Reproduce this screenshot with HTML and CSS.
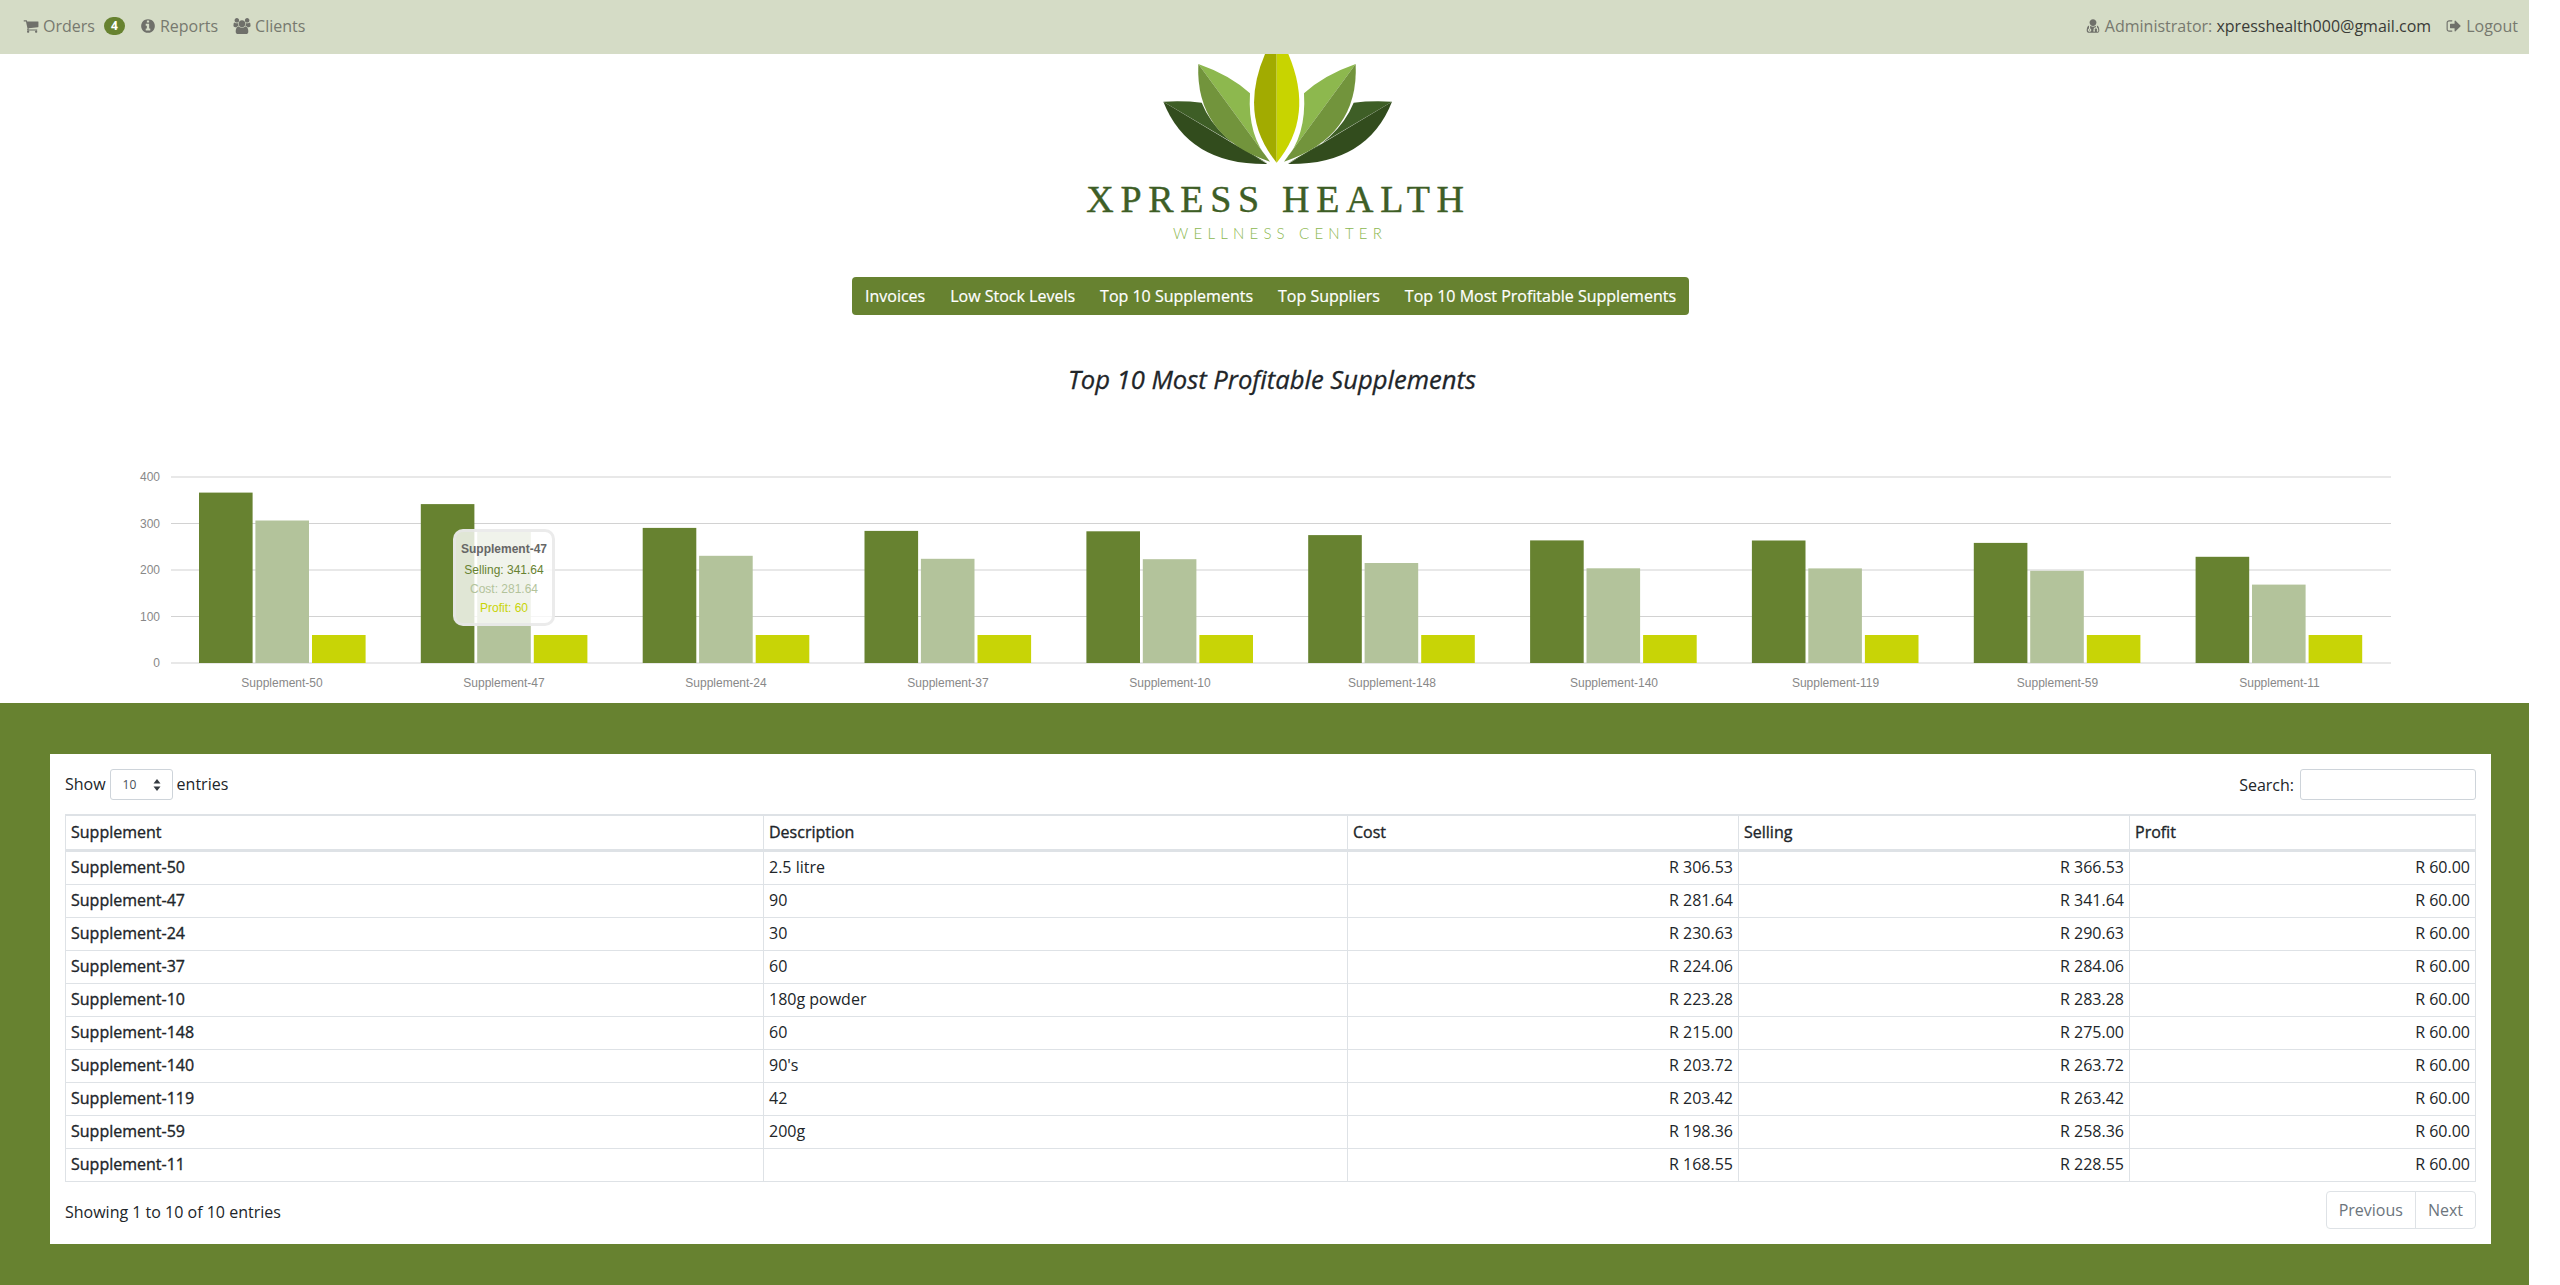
FILE: index.html
```html
<!DOCTYPE html>
<html lang="en">
<head>
  <meta charset="UTF-8">
  <title>Top 10 Most Profitable Supplements</title>
  <link rel="stylesheet" href="styles.css">
</head>
<body>
  <header class="topbar">
    <nav class="topbar-links">
      <a class="topbar-link"><svg class="fa" viewBox="0 0 1792 1792"><path d="M704 1536q0 52-38 90t-90 38-90-38-38-90 38-90 90-38 90 38 38 90zm896 0q0 52-38 90t-90 38-90-38-38-90 38-90 90-38 90 38 38 90zm128-1088v512q0 24-16.5 42.5t-40.5 21.5l-1044 122q13 60 13 70 0 16-24 64h920q26 0 45 19t19 45-19 45-45 19h-1024q-26 0-45-19t-19-45q0-11 8-31.5t16-36 21.5-40 15.5-29.5l-177-823h-204q-26 0-45-19t-19-45 19-45 45-19h256q16 0 28.5 6.5t19.5 15.5 13 24.5 8 26 5.5 29.5 4.5 26h1201q26 0 45 19t19 45z"/></svg>Orders<span class="badge">4</span></a>
      <a class="topbar-link"><svg class="fa" viewBox="0 0 1792 1792"><path d="M1152 1376v-160q0-14-9-23t-23-9h-96v-512q0-14-9-23t-23-9h-320q-14 0-23 9t-9 23v160q0 14 9 23t23 9h96v320h-96q-14 0-23 9t-9 23v160q0 14 9 23t23 9h448q14 0 23-9t9-23zm-128-896v-160q0-14-9-23t-23-9h-192q-14 0-23 9t-9 23v160q0 14 9 23t23 9h192q14 0 23-9t9-23zm640 416q0 209-103 385.5t-279.5 279.5-385.5 103-385.5-103-279.5-279.5-103-385.5 103-385.5 279.5-279.5 385.5-103 385.5 103 279.5 279.5 103 385.5z"/></svg>Reports</a>
      <a class="topbar-link"><svg class="fa fa-wide" viewBox="0 0 1920 1792"><path d="M593 896q-162 5-265 128h-134q-82 0-138-40.5t-56-118.5q0-353 124-353 6 0 43.5 21t97.5 42.5 119 21.5q67 0 133-23-5 37-5 66 0 139 81 256zm1071 637q0 120-73 189.5t-194 69.5h-874q-121 0-194-69.5t-73-189.5q0-53 3.5-103.5t14-109 26.5-108.5 43-97.5 62-81 85.5-53.5 111.5-20q10 0 43 21.5t73 48 107 48 135 21.5 135-21.5 107-48 73-48 43-21.5q61 0 111.5 20t85.5 53.5 62 81 43 97.5 26.5 108.5 14 109 3.5 103.5zm-1024-1277q0 106-75 181t-181 75-181-75-75-181 75-181 181-75 181 75 75 181zm704 384q0 159-112.5 271.5t-271.5 112.5-271.5-112.5-112.5-271.5 112.5-271.5 271.5-112.5 271.5 112.5 112.5 271.5zm576 225q0 78-56 118.5t-138 40.5h-134q-103-123-265-128 81-117 81-256 0-29-5-66 66 23 133 23 59 0 119-21.5t97.5-42.5 43.5-21q124 0 124 353zm-128-609q0 106-75 181t-181 75-181-75-75-181 75-181 181-75 181 75 75 181z"/></svg>Clients</a>
    </nav>
    <div class="topbar-links">
      <span class="topbar-link"><svg class="fa" viewBox="0 0 1792 1792"><path d="M576 1344q0 26-19 45t-45 19-45-19-19-45 19-45 45-19 45 19 19 45zm1024 61q0 121-73 190t-194 69h-874q-121 0-194-69t-73-190q0-68 5.5-131t24-138 47.5-132.5 81-103 120-60.5q-22 52-22 120v203q-58 20-93 70t-35 111q0 80 56 136t136 56 136-56 56-136q0-61-35.5-111t-92.5-70v-203q0-62 25-93 132 104 295 104t295-104q25 31 25 93v64q-106 0-181 75t-75 181v89q-32 29-32 71 0 40 28 68t68 28 68-28 28-68q0-42-32-71v-89q0-52 38-90t90-38 90 38 38 90v89q-32 29-32 71 0 40 28 68t68 28 68-28 28-68q0-42-32-71v-89q0-68-34.5-127.5t-93.5-93.5q0-10 .5-42.5t0-48-2.5-41.5-7-47-13-40q68 15 120 60.5t81 103 47.5 132.5 24 138 5.5 131zm-320-893q0 159-112.5 271.5t-271.5 112.5-271.5-112.5-112.5-271.5 112.5-271.5 271.5-112.5 271.5 112.5 112.5 271.5z"/></svg>Administrator:&nbsp;<span class="topbar-email">xpresshealth000@gmail.com</span></span>
      <a class="topbar-link"><svg class="fa" viewBox="0 0 1792 1792"><path d="M704 1440q0 4 1 20t.5 26.5-3 23.5-10 19.5-20.5 6.5h-320q-119 0-203.5-84.5t-84.5-203.5v-704q0-119 84.5-203.5t203.5-84.5h320q13 0 22.5 9.5t9.5 22.5q0 4 1 20t.5 26.5-3 23.5-10 19.5-20.5 6.5h-320q-66 0-113 47t-47 113v704q0 66 47 113t113 47h312l11.5 1 11.5 3 8 5.5 7 9 2 13.5zm928-544q0 26-19 45l-544 544q-19 19-45 19t-45-19-19-45v-288h-448q-26 0-45-19t-19-45v-384q0-26 19-45t45-19h448v-288q0-26 19-45t45-19 45 19l544 544q19 19 19 45z"/></svg>Logout</a>
    </div>
  </header>

  <div class="logo">
    <svg class="logo-mark" viewBox="0 42 1320 336">
      <path fill="#3e5e26" d="M310 185 Q375 182 425 188 Q470 300 622 370 Z"/>
      <path fill="#324c1d" d="M310 185 Q385 375 622 372 Z"/>
      <path fill="#3e5e26" d="M996 185 Q931 182 881 188 Q836 300 684 370 Z"/>
      <path fill="#324c1d" d="M996 185 Q921 375 684 372 Z"/>
      <path fill="#8db84e" d="M415 72 Q510 105 570 160 Q562 290 630 365 Z"/>
      <path fill="#72943c" d="M415 72 Q405 290 630 365 Z"/>
      <path fill="#8db84e" d="M887 72 Q792 105 732 160 Q740 290 672 365 Z"/>
      <path fill="#72943c" d="M887 72 Q897 290 672 365 Z"/>
      <path fill="#a2ab00" d="M650 368 Q535 230 615 42 L650 42 Z"/>
      <path fill="#c8d400" d="M650 368 Q765 230 685 42 L650 42 Z"/>
    </svg>
    <div class="logo-name">XPRESS HEALTH</div>
    <div class="logo-sub">WELLNESS CENTER</div>
  </div>

  <nav class="tabs">
    <a class="tab">Invoices</a>
    <a class="tab">Low Stock Levels</a>
    <a class="tab">Top 10 Supplements</a>
    <a class="tab">Top Suppliers</a>
    <a class="tab">Top 10 Most Profitable Supplements</a>
  </nav>

  <h2 class="page-title">Top 10 Most Profitable Supplements</h2>

  <div class="chart">
    <svg class="chart-svg" viewBox="0 0 2529 263">
      <g class="grid">
        <line x1="171" x2="2391" y1="37" y2="37" class="grid-thick"/>
        <line x1="171" x2="2391" y1="83.5" y2="83.5"/>
        <line x1="171" x2="2391" y1="130" y2="130" class="grid-thick"/>
        <line x1="171" x2="2391" y1="176.5" y2="176.5"/>
        <line x1="171" x2="2391" y1="223" y2="223" class="grid-thick"/>
      </g>
      <g class="ticks">
        <text x="160" y="41">400</text>
        <text x="160" y="87.5">300</text>
        <text x="160" y="134">200</text>
        <text x="160" y="180.5">100</text>
        <text x="160" y="227">0</text>
      </g>
      <g class="bars-selling">
        <rect x="199" y="52.6" width="53.6" height="170.4"/>
        <rect x="420.8" y="64.1" width="53.6" height="158.9"/>
        <rect x="642.7" y="87.9" width="53.6" height="135.1"/>
        <rect x="864.5" y="90.9" width="53.6" height="132.1"/>
        <rect x="1086.4" y="91.3" width="53.6" height="131.7"/>
        <rect x="1308.2" y="95.1" width="53.6" height="127.9"/>
        <rect x="1530.1" y="100.4" width="53.6" height="122.6"/>
        <rect x="1751.9" y="100.5" width="53.6" height="122.5"/>
        <rect x="1973.8" y="102.9" width="53.6" height="120.1"/>
        <rect x="2195.6" y="116.8" width="53.6" height="106.2"/>
      </g>
      <g class="bars-cost">
        <rect x="255.4" y="80.5" width="53.6" height="142.5"/>
        <rect x="477.2" y="92" width="53.6" height="131"/>
        <rect x="699.1" y="115.8" width="53.6" height="107.2"/>
        <rect x="920.9" y="118.8" width="53.6" height="104.2"/>
        <rect x="1142.8" y="119.2" width="53.6" height="103.8"/>
        <rect x="1364.6" y="123" width="53.6" height="100"/>
        <rect x="1586.5" y="128.3" width="53.6" height="94.7"/>
        <rect x="1808.3" y="128.4" width="53.6" height="94.6"/>
        <rect x="2030.2" y="130.8" width="53.6" height="92.2"/>
        <rect x="2252" y="144.6" width="53.6" height="78.4"/>
      </g>
      <g class="bars-profit">
        <rect x="312" y="195" width="53.6" height="28"/>
        <rect x="533.8" y="195" width="53.6" height="28"/>
        <rect x="755.7" y="195" width="53.6" height="28"/>
        <rect x="977.5" y="195" width="53.6" height="28"/>
        <rect x="1199.4" y="195" width="53.6" height="28"/>
        <rect x="1421.2" y="195" width="53.6" height="28"/>
        <rect x="1643.1" y="195" width="53.6" height="28"/>
        <rect x="1864.9" y="195" width="53.6" height="28"/>
        <rect x="2086.8" y="195" width="53.6" height="28"/>
        <rect x="2308.6" y="195" width="53.6" height="28"/>
      </g>
      <g class="labels">
        <text x="282" y="247">Supplement-50</text>
        <text x="504" y="247">Supplement-47</text>
        <text x="726" y="247">Supplement-24</text>
        <text x="948" y="247">Supplement-37</text>
        <text x="1170" y="247">Supplement-10</text>
        <text x="1392" y="247">Supplement-148</text>
        <text x="1614" y="247">Supplement-140</text>
        <text x="1835.5" y="247">Supplement-119</text>
        <text x="2057.5" y="247">Supplement-59</text>
        <text x="2279.5" y="247">Supplement-11</text>
      </g>
    </svg>
    <div class="chart-hover">
      <div class="hover-title">Supplement-47</div>
      <div class="hover-selling">Selling: 341.64</div>
      <div class="hover-cost">Cost: 281.64</div>
      <div class="hover-profit">Profit: 60</div>
    </div>
  </div>

  <main class="content">
    <section class="card">
      <div class="table-top">
        <label class="length">Show
          <span class="fake-select">10<svg class="select-arrows" viewBox="0 0 8 14"><path d="M4 1 7.5 5.5H.5zM4 13 .5 8.5h7z"/></svg></span>
          entries</label>
        <label class="search">Search: <input class="search-input" type="text"></label>
      </div>
      <table class="report">
        <thead>
          <tr><th class="col-a">Supplement</th><th class="col-b">Description</th><th class="col-c">Cost</th><th class="col-c">Selling</th><th>Profit</th></tr>
        </thead>
        <tbody>
          <tr><td class="name">Supplement-50</td><td>2.5 litre</td><td class="num">R 306.53</td><td class="num">R 366.53</td><td class="num">R 60.00</td></tr>
          <tr><td class="name">Supplement-47</td><td>90</td><td class="num">R 281.64</td><td class="num">R 341.64</td><td class="num">R 60.00</td></tr>
          <tr><td class="name">Supplement-24</td><td>30</td><td class="num">R 230.63</td><td class="num">R 290.63</td><td class="num">R 60.00</td></tr>
          <tr><td class="name">Supplement-37</td><td>60</td><td class="num">R 224.06</td><td class="num">R 284.06</td><td class="num">R 60.00</td></tr>
          <tr><td class="name">Supplement-10</td><td>180g powder</td><td class="num">R 223.28</td><td class="num">R 283.28</td><td class="num">R 60.00</td></tr>
          <tr><td class="name">Supplement-148</td><td>60</td><td class="num">R 215.00</td><td class="num">R 275.00</td><td class="num">R 60.00</td></tr>
          <tr><td class="name">Supplement-140</td><td>90's</td><td class="num">R 203.72</td><td class="num">R 263.72</td><td class="num">R 60.00</td></tr>
          <tr><td class="name">Supplement-119</td><td>42</td><td class="num">R 203.42</td><td class="num">R 263.42</td><td class="num">R 60.00</td></tr>
          <tr><td class="name">Supplement-59</td><td>200g</td><td class="num">R 198.36</td><td class="num">R 258.36</td><td class="num">R 60.00</td></tr>
          <tr><td class="name">Supplement-11</td><td></td><td class="num">R 168.55</td><td class="num">R 228.55</td><td class="num">R 60.00</td></tr>
        </tbody>
      </table>
      <div class="table-bottom">
        <div class="info">Showing 1 to 10 of 10 entries</div>
        <div class="pager"><a class="page-btn">Previous</a><a class="page-btn">Next</a></div>
      </div>
    </section>
  </main>
</body>
</html>
```

FILE: styles.css
```css
* {
  box-sizing: border-box;
}
html, body {
  margin: 0;
  padding: 0;
}
body {
  font-family: "Open Sans", sans-serif;
  font-size: 16px;
  line-height: 24px;
  color: #212529;
  background: #fff;
  width: 2529px;
  min-height: 1285px;
  display: flex;
  flex-direction: column;
}

/* top bar */
.topbar {
  height: 54px;
  background: #d5dcc6;
  display: flex;
  justify-content: space-between;
  align-items: center;
  padding: 0 11px 2px 23px;
  flex: none;
}
.topbar-links {
  display: flex;
  align-items: center;
  gap: 15px;
}
.topbar-link {
  display: flex;
  align-items: center;
  color: #77796f;
}
.topbar-email {
  color: #3a3b37;
}
.fa {
  width: 16px;
  height: 16px;
  fill: #6f706a;
  margin-right: 4px;
  flex: none;
}
.fa-wide {
  width: 18px;
}
.badge {
  margin-left: 9px;
  width: 21px;
  height: 18px;
  border-radius: 9px;
  background: #678230;
  color: #fff;
  font-size: 12px;
  font-weight: 700;
  line-height: 18px;
  text-align: center;
}

/* logo */
.logo {
  flex: none;
  height: 223px;
  width: 440px;
  margin-left: 1060px;
}
.logo-mark {
  display: block;
  width: 440px;
  height: 112px;
}
.logo-name {
  margin-top: 14px;
  padding-right: 3px;
  font-family: "Liberation Serif", serif;
  font-size: 38px;
  line-height: 38px;
  letter-spacing: 6.7px;
  color: #3e5e26;
  text-align: center;
  white-space: nowrap;
  -webkit-text-stroke: 0.4px #3e5e26;
}
.logo-sub {
  margin-top: 5px;
  font-family: Lato, sans-serif;
  font-weight: 300;
  font-size: 15px;
  line-height: 20px;
  letter-spacing: 5.2px;
  color: #8cb850;
  text-align: center;
  white-space: nowrap;
}

/* green tab strip */
.tabs {
  flex: none;
  align-self: flex-start;
  margin-left: 852px;
  height: 38px;
  display: flex;
  align-items: center;
  padding: 0 0.5px;
  background: #678230;
  border-radius: 4px;
}
.tab {
  padding: 0 12.5px;
  color: #fff;
  white-space: nowrap;
  -webkit-text-stroke: 0.2px #fff;
}
.page-title {
  flex: none;
  margin: 48px 0 0 0;
  padding-left: 15px;
  height: 34px;
  font-size: 25.6px;
  line-height: 34px;
  font-weight: 400;
  font-style: italic;
  color: #212529;
  text-align: center;
  -webkit-text-stroke: 0.3px #212529;
}

/* chart */
.chart {
  flex: none;
  position: relative;
  margin-top: 43px;
  height: 263px;
}
.chart-svg {
  display: block;
  width: 2529px;
  height: 263px;
}
.grid line {
  stroke: #d2d2d2;
  stroke-width: 1;
}
.grid .grid-thick {
  stroke: #e8e8e8;
  stroke-width: 2;
}
.ticks text {
  font-family: "Liberation Sans", sans-serif;
  font-size: 12px;
  fill: #888;
  text-anchor: end;
}
.labels text {
  font-family: "Liberation Sans", sans-serif;
  font-size: 12px;
  fill: #888;
  text-anchor: middle;
}
.bars-selling rect {
  fill: #678230;
}
.bars-cost rect {
  fill: #b3c39b;
}
.bars-profit rect {
  fill: #c8d406;
}
.chart-hover {
  position: absolute;
  left: 453px;
  top: 89px;
  width: 102px;
  height: 97px;
  padding: 8px 0 0;
  background: rgba(255, 255, 255, 0.8);
  border: 3px solid rgba(230, 230, 230, 0.8);
  border-radius: 10px;
  font-family: "Liberation Sans", sans-serif;
  font-size: 12px;
  line-height: 19px;
  text-align: center;
  white-space: nowrap;
}
.hover-title {
  font-weight: 700;
  color: #666;
  margin-bottom: 2px;
}
.hover-selling {
  color: #678230;
}
.hover-cost {
  color: #b3c39b;
}
.hover-profit {
  color: #c8d406;
}

/* table section */
.content {
  flex: 1;
  background: #678230;
  padding: 51px 38px 41px 50px;
}
.card {
  background: #fff;
  height: 490px;
  padding: 15px 15px 0;
}
.table-top {
  display: flex;
  justify-content: space-between;
  align-items: center;
  height: 31px;
  margin-bottom: 14px;
}
.length, .search {
  display: flex;
  align-items: center;
  gap: 4px;
  padding-bottom: 2px;
}
.search {
  gap: 6px;
  padding-bottom: 0;
}
.fake-select {
  width: 63px;
  height: 31px;
  margin-bottom: -2px;
  padding-left: 12px;
  border: 1px solid #ced4da;
  border-radius: 3px;
  font-size: 12px;
  line-height: 29px;
  color: #495057;
  position: relative;
}
.select-arrows {
  position: absolute;
  right: 11px;
  top: 8px;
  width: 8px;
  height: 14px;
  fill: #343a40;
}
.search-input {
  width: 176px;
  height: 31px;
  padding: 0 8px;
  border: 1px solid #ced4da;
  border-radius: 3px;
  background: #fff;
}
.report {
  width: 100%;
  table-layout: fixed;
  border-collapse: collapse;
  border: 1px solid #dee2e6;
}
.report th, .report td {
  height: 33px;
  padding: 3px 5px 5px;
  border: 1px solid #dee2e6;
  text-align: left;
  font-weight: 400;
}
.report th {
  border-top-width: 2px;
  border-bottom-width: 3px;
  height: 35px;
  padding: 3px 5px 4px;
  -webkit-text-stroke: 0.35px #212529;
}
.report .col-a {
  width: 698px;
}
.report .col-b {
  width: 584px;
}
.report .col-c {
  width: 391px;
}
.report .name {
  -webkit-text-stroke: 0.35px #212529;
}
.report .num {
  text-align: right;
}
.table-bottom {
  display: flex;
  justify-content: space-between;
  align-items: flex-start;
  margin-top: 9px;
}
.info {
  padding-top: 9px;
}
.pager {
  display: flex;
  height: 38px;
  border: 1px solid #dee2e6;
  border-radius: 4px;
}
.page-btn {
  padding: 6px 12px;
  color: #6c757d;
}
.page-btn + .page-btn {
  border-left: 1px solid #dee2e6;
}
```
